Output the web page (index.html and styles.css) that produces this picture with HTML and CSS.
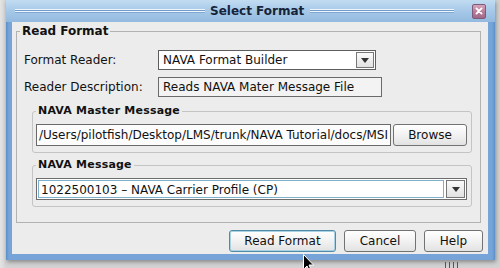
FILE: index.html
```html
<!DOCTYPE html>
<html lang="en">
<head>
  <meta charset="UTF-8">
  <title>Select Format</title>
  <link rel="stylesheet" href="styles.css">
</head>
<body>
  <div class="window">
    <div class="titlebar">
      <span class="grip grip-left"></span>
      <span class="title">Select Format</span>
      <span class="grip grip-right"></span>
      <span class="close">
        <svg width="14" height="14" viewBox="0 0 14 14">
          <path d="M4 4 L10 10 M10 4 L4 10" stroke="#fff" stroke-width="2.2" stroke-linecap="round"/>
        </svg>
      </span>
    </div>

    <div class="content">
      <fieldset class="group">
        <legend>Read Format</legend>

        <div class="row">
          <label class="field-label">Format Reader:</label>
          <div class="combo combo-reader">
            <span class="combo-text">NAVA Format Builder</span>
            <span class="arrow"><span class="tri"></span></span>
          </div>
        </div>

        <div class="row">
          <label class="field-label">Reader Description:</label>
          <div class="textfield desc-field">Reads NAVA Mater Message File</div>
        </div>

        <fieldset class="subgroup">
          <legend>NAVA Master Message</legend>
          <div class="row row-tall">
            <div class="textfield path-field">/Users/pilotfish/Desktop/LMS/trunk/NAVA Tutorial/docs/MSI</div>
            <button class="btn btn-browse">Browse</button>
          </div>
        </fieldset>

        <fieldset class="subgroup subgroup-msg">
          <legend>NAVA Message</legend>
          <div class="combo combo-message">
            <span class="combo-text">1022500103 &ndash; NAVA Carrier Profile (CP)</span>
            <span class="arrow"><span class="tri"></span></span>
          </div>
        </fieldset>
      </fieldset>

      <div class="actions">
        <button class="btn btn-primary">Read Format</button>
        <button class="btn btn-cancel">Cancel</button>
        <button class="btn btn-help">Help</button>
      </div>
    </div>
  </div>

  <div class="desk-marks"></div>

  <svg class="cursor" width="12" height="19" viewBox="0 0 12 19">
    <path d="M0.5 0.5 L0.5 15.5 L4 12 L6.5 17.5 L8.5 16.5 L6 11 L10.5 11 Z" fill="#000" stroke="#fff" stroke-width="1"/>
  </svg>
</body>
</html>
```

FILE: styles.css
```css
* {
  box-sizing: border-box;
}
body {
  margin: 0;
  width: 500px;
  height: 268px;
  overflow: hidden;
  position: relative;
  background: linear-gradient(90deg, #e4e4e4, #d2d2d2 6px, #d2d2d2);
  font-family: "DejaVu Sans", sans-serif;
  font-size: 12px;
  color: #111;
}
.window {
  margin-left: 6px;
  width: 489px;
  height: 260px;
  display: flex;
  flex-direction: column;
  background: linear-gradient(90deg, #5d8fca, #76a4d8 3px, #76a4d8 calc(100% - 3px), #5d8fca);
  box-shadow: 1px 2px 4px rgba(0,0,0,0.35);
}
.titlebar {
  height: 22px;
  display: flex;
  align-items: center;
  padding: 0 9px;
  background: linear-gradient(#c2dcf1, #a9cae9 45%, #93badf);
}
.grip {
  height: 4px;
  background: linear-gradient(#eef6fc 0 1px, #6f9ccb 1px 2px, #eef6fc 2px 3px, #7fa8d2 3px 4px);
}
.grip-left {
  width: 190px;
}
.grip-right {
  flex: 1;
}
.title {
  margin: 0 6px 0 5px;
  font-weight: bold;
  font-size: 12px;
  color: #16243a;
}
.close {
  width: 14px;
  height: 15px;
  margin-left: 18px;
  display: flex;
  align-items: center;
  justify-content: center;
  border: 1px solid #7d5a78;
  border-radius: 2px;
  background: linear-gradient(#d7a3bc, #b57a99 55%, #a06888);
}
.content {
  flex: 1;
  margin: 0 7px 6px 6px;
  padding-top: 2px;
  background: #ececec;
}
.group {
  margin: 0 7px 0 4px;
  padding: 12px 8px 15px 7px;
  border: 1px solid #b2b2b2;
}
.group > legend {
  margin-left: -4px;
  padding: 0 2px;
  font-weight: bold;
  line-height: 14px;
}
.row {
  display: flex;
  align-items: center;
  height: 20px;
  margin-bottom: 7px;
}
.field-label {
  width: 134px;
}
.textfield {
  height: 20px;
  padding: 0 4px;
  line-height: 18px;
  border: 1px solid #6a6a6a;
  white-space: nowrap;
  overflow: hidden;
}
.desc-field {
  width: 224px;
  background: #f3f3f3;
}
.combo {
  display: flex;
  height: 20px;
  border: 1px solid #5e5e5e;
  background: #fff;
}
.combo-text {
  flex: 1;
  padding-left: 4px;
  line-height: 18px;
  white-space: nowrap;
}
.combo-reader {
  width: 218px;
}
.arrow {
  width: 18px;
  margin: 1px;
  display: flex;
  align-items: center;
  justify-content: center;
  border: 1px solid #777;
  background: linear-gradient(#fafafa, #e2e2e2);
}
.tri {
  width: 0;
  height: 0;
  border-left: 4px solid transparent;
  border-right: 4px solid transparent;
  border-top: 5px solid #333;
}
.subgroup {
  margin: 7px 0 0 8px;
  padding: 6px 4px 6px 3px;
  border: 1px solid #c4c4c4;
  border-radius: 3px;
}
.subgroup > legend {
  padding: 0 2px;
  font-weight: bold;
  font-size: 11px;
  line-height: 14px;
  letter-spacing: 0.2px;
}
.subgroup .row {
  margin-bottom: 0;
}
.row-tall {
  height: 22px;
}
.path-field {
  width: 355px;
  height: 22px;
  line-height: 20px;
  padding: 0 2px;
  background: #fcfcfc;
}
.btn {
  height: 22px;
  padding: 0;
  font-family: inherit;
  font-size: 12px;
  color: #111;
  border: 1px solid #727272;
  border-radius: 3px;
  background: linear-gradient(#ffffff, #f2f2f2 50%, #e2e2e2);
}
.btn-browse {
  width: 74px;
  margin-left: 2px;
}
.subgroup-msg {
  margin-top: 5px;
}
.combo-message {
  height: 22px;
  border-color: #6d6d6d;
}
.combo-message .combo-text {
  margin: 1px;
  line-height: 18px;
  padding-left: 2px;
  border: 1px solid #7fb0cc;
  background: #fff;
}
.combo-message .arrow {
  width: 19px;
}
.actions {
  display: flex;
  justify-content: flex-end;
  gap: 8px;
  margin-top: 7px;
  padding-right: 5px;
}
.btn-primary {
  width: 107px;
  border-color: #4f8aa6;
  box-shadow: inset 0 0 0 1px #a9d3e4;
}
.btn-cancel {
  width: 72px;
}
.btn-help {
  width: 59px;
}
.desk-marks {
  position: absolute;
  left: 445px;
  top: 262px;
  width: 16px;
  height: 6px;
  background: repeating-linear-gradient(90deg, #555 0 1px, transparent 1px 4px);
}
.cursor {
  position: absolute;
  left: 303px;
  top: 254px;
}
```
